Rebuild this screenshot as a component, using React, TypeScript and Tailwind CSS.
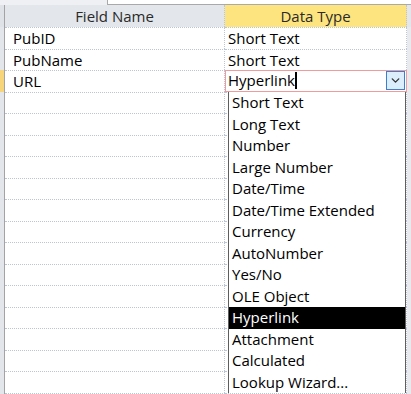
import { ChevronDown } from 'lucide-react';

const fields = [
  { name: 'PubID', type: 'Short Text' },
  { name: 'PubName', type: 'Short Text' },
  { name: 'URL', type: 'Hyperlink', active: true },
];

const types = [
  'Short Text',
  'Long Text',
  'Number',
  'Large Number',
  'Date/Time',
  'Date/Time Extended',
  'Currency',
  'AutoNumber',
  'Yes/No',
  'OLE Object',
  'Hyperlink',
  'Attachment',
  'Calculated',
  'Lookup Wizard...',
];

const emptyRows = Array.from({ length: 15 });

export default function App() {
  return (
    <div
      className="relative w-[411px] h-[394px] overflow-hidden bg-white text-[15px] text-black"
      style={{ fontFamily: '"Open Sans", "Noto Sans", sans-serif' }}
    >
      {/* bande du haut */}
      <div className="h-[5px] bg-[#eef0f3] flex">
        <div className="ml-[107px] flex-1 bg-white border-l border-b border-[#a9a9a9]" />
      </div>

      {/* en-tête */}
      <div className="flex h-[22px] leading-[22px]">
        <div className="w-[5px] bg-[#dfe2e7] border-r border-[#a3a3a3]" />
        <div className="w-[220px] bg-[#e3e6eb] text-center text-[#2a2a2a] border-r border-dotted border-[#bcc4d8]">Field Name</div>
        <div className="w-[182px] bg-[#fde47e] text-center text-[#2a2a2a] border-r border-dotted border-[#bcc4d8]">Data Type</div>
        <div className="flex-1 bg-[#e3e6eb]" />
      </div>

      {/* lignes */}
      {fields.map((f) => (
        <div key={f.name} className="flex h-[21.5px] leading-[21px]">
          <div className={`w-[5px] border-r border-[#a3a3a3] ${f.active ? 'bg-[#f7d57a]' : 'bg-[#e3e6eb]'}`} />
          <div className="w-[220px] pl-[8px] border-r border-t border-dotted border-[#bcc4d8]">{f.name}</div>
          {f.active ? (
            <div className="w-[182px] flex items-center border border-[#f19c9c]">
              <span className="pl-[2px] flex-1 flex items-center">
                {f.type}
                <span className="inline-block w-[2px] h-[17px] bg-black" />
              </span>
              <span className="mr-[1px] w-[19px] h-[19px] flex items-center justify-center bg-[#dceefc] border border-[#3c7fd0]">
                <ChevronDown className="w-[13px] h-[13px] text-[#333]" strokeWidth={2.5} />
              </span>
            </div>
          ) : (
            <div className="w-[182px] pl-[3px] border-r border-t border-dotted border-[#bcc4d8]">{f.type}</div>
          )}
          <div className="flex-1 bg-[#e8eaee]" />
        </div>
      ))}
      {emptyRows.map((_, i) => (
        <div key={i} className="flex h-[21.5px]">
          <div className="w-[5px] bg-[#e3e6eb] border-r border-[#a3a3a3]" />
          <div className="w-[220px] border-r border-t border-dotted border-[#bcc4d8]" />
          <div className="w-[182px] border-r border-t border-dotted border-[#bcc4d8]" />
          <div className="flex-1 bg-[#e8eaee]" />
        </div>
      ))}

      {/* liste déroulante */}
      <div className="absolute left-[228px] top-[92px] w-[178px] bg-white border-x border-[#5e5e5e]">
        {types.map((t) => (
          <div
            key={t}
            className={`h-[21.5px] leading-[21.5px] pl-[3px] ${t === 'Hyperlink' ? 'bg-black text-white' : ''}`}
          >
            {t}
          </div>
        ))}
      </div>
    </div>
  );
}
